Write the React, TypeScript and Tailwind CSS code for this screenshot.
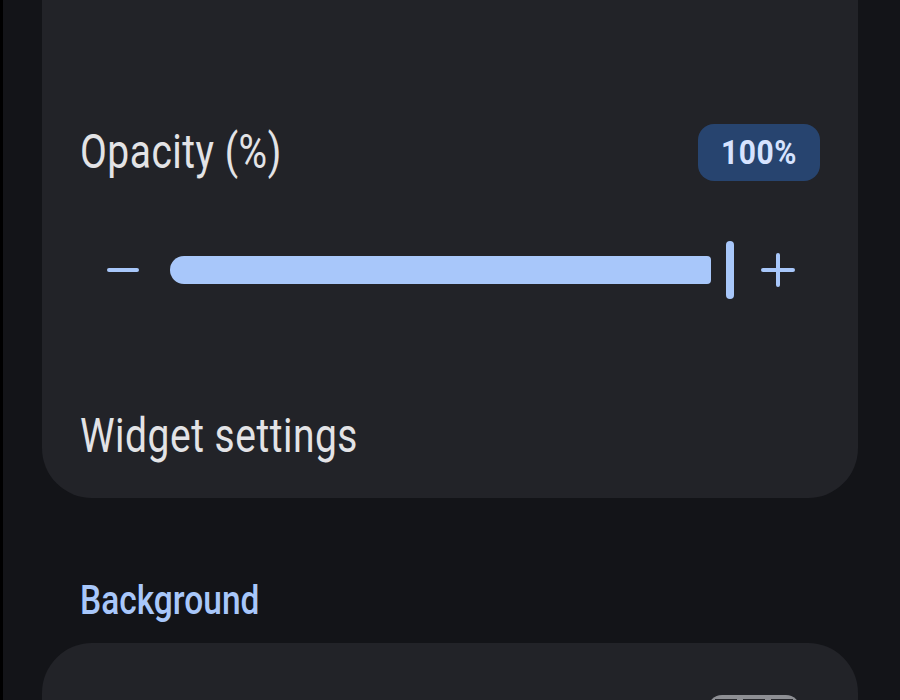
import React from "react";

export default function App() {
  return (
    <div className="w-[900px] h-[700px] overflow-hidden bg-[#131418] flex" style={{ fontFamily: "Roboto, 'Noto Sans', sans-serif" }}>
      <div className="w-[3px] bg-black shrink-0" />
      <div className="flex-1 flex flex-col pl-[39px] pr-[42px]">
        <div className="shrink-0 mt-[-60px] h-[558px] bg-[#222328] rounded-[50px] flex flex-col justify-end px-[38px]">
          <div className="flex items-center justify-between">
            <div className="text-[39px] text-[#e3e3e6] tracking-[0.5px] origin-left scale-y-[1.22] leading-none">Opacity (%)</div>
            <div className="w-[122px] h-[57px] rounded-[16px] bg-[#27446f] flex items-center justify-center text-[#d6e3ff] text-[30px] font-bold tracking-[0.5px]">
              <span className="inline-block scale-y-[1.1]">100%</span>
            </div>
          </div>
          <div className="mt-[60px] flex items-center h-[58px]">
            <div className="ml-[27px] w-[32px] h-[4px] rounded-full bg-[#a8c7fa]" />
            <div className="ml-[31px] w-[541px] h-[28px] bg-[#a8c7fa] rounded-l-[14px] rounded-r-[4px]" />
            <div className="ml-[15px] w-[8px] h-[58px] rounded-full bg-[#a8c7fa]" />
            <div className="ml-[27px] relative w-[34px] h-[34px]">
              <div className="absolute left-0 top-[15px] w-[34px] h-[4px] rounded-full bg-[#a8c7fa]" />
              <div className="absolute left-[15px] top-0 w-[4px] h-[34px] rounded-full bg-[#a8c7fa]" />
            </div>
          </div>
          <div className="mt-[118px] mb-[42px] text-[39px] text-[#e3e3e6] tracking-[0.5px] origin-left scale-y-[1.22] leading-none">Widget settings</div>
        </div>
        <div className="shrink-0 mt-[86px] pl-[38px] text-[33.5px] text-[#a8c7fa] font-medium origin-left scale-y-[1.2] leading-none">Background</div>
        <div className="shrink-0 mt-[25px] h-[120px] bg-[#222328] rounded-[50px] relative">
          <div className="absolute left-[666px] top-[52px] w-[92px] h-[40px] rounded-[14px] bg-[#8e8f94] flex gap-[6px] justify-center pt-[4px]">
            <div className="w-[22px] h-[8px] bg-[#2a2b30]" />
            <div className="w-[22px] h-[8px] bg-[#2a2b30]" />
            <div className="w-[22px] h-[8px] bg-[#2a2b30]" />
          </div>
        </div>
      </div>
    </div>
  );
}
